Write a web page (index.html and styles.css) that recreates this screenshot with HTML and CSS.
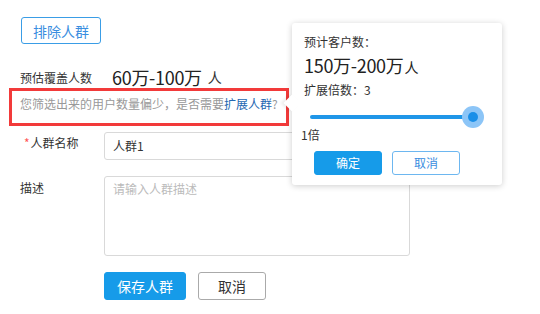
FILE: index.html
```html
<!DOCTYPE html>
<html lang="zh">
<head>
<meta charset="utf-8">
<link rel="stylesheet" href="styles.css">
</head>
<body>
<div class="page">
  <div class="row-top"><button class="btn btn-outline">排除人群</button></div>
  <div class="row-est">
    <span class="est-label">预估覆盖人数</span>
    <span class="est-value">60万-100万</span>
    <span class="est-unit">人</span>
  </div>
  <div class="hint">您筛选出来的用户数量偏少，是否需要<a class="hint-link">扩展人群</a>?</div>
  <div class="form-row row-name">
    <label class="form-label"><span class="req">*</span>人群名称</label>
    <div class="input">人群1</div>
  </div>
  <div class="form-row row-desc">
    <label class="form-label desc-label">描述</label>
    <div class="textarea"><span class="placeholder">请输入人群描述</span></div>
  </div>
  <div class="form-actions">
    <button class="btn btn-primary btn-save">保存人群</button>
    <button class="btn btn-default">取消</button>
  </div>

  <div class="popover">
    <div class="pop-arrow"></div>
    <div class="pop-title">预计客户数：</div>
    <div class="pop-value">150万-200万<span class="pop-unit">人</span></div>
    <div class="pop-mult">扩展倍数：3</div>
    <div class="slider">
      <div class="slider-track"></div>
      <div class="slider-handle"></div>
    </div>
    <div class="slider-min">1倍</div>
    <div class="pop-actions">
      <button class="btn btn-primary btn-sm">确定</button>
      <button class="btn btn-outline btn-sm btn-pop-cancel">取消</button>
    </div>
  </div>
</div>
</body>
</html>
```

FILE: styles.css
```css
* { box-sizing: border-box; }
html, body { margin: 0; padding: 0; background: #fff; }
body {
  font-family: "Noto Sans CJK SC", "Noto Sans", sans-serif;
  font-size: 12px;
  color: #333;
  width: 540px;
  height: 314px;
  overflow: hidden;
}
.page {
  position: relative;
  padding: 17px 0 0 20px;
  height: 314px;
}
.btn {
  font-family: inherit;
  border-radius: 3px;
  padding: 0;
  margin: 0;
  cursor: pointer;
  line-height: 1;
  display: inline-flex;
  align-items: center;
  justify-content: center;
}
.btn-outline {
  background: #fff;
  border: 1px solid #3a9de6;
  color: #3a8ee0;
  font-size: 14px;
  width: 80px;
  height: 27px;
  margin-left: 1px;
}
.row-top { display: flex; height: 27px; }
.row-est {
  display: flex;
  align-items: center;
  margin-top: 22px;
  height: 22px;
}
.est-label { width: 92px; font-size: 12px; color: #333; }
.est-value { font-size: 18px; color: #222; letter-spacing: -0.3px; }
.est-unit { font-size: 14px; margin-left: 6px; color: #333; }
.hint {
  margin-left: -11px;
  width: 280px;
  height: 38px;
  border: 3px solid #f23a3a;
  padding: 4px 0 0 8px;
  line-height: 18px;
  color: #999;
  font-size: 12px;
  white-space: nowrap;
}
.hint-link { color: #2467b1; }
.form-row { display: flex; align-items: flex-start; }
.row-name { margin-top: 6px; }
.form-label { width: 84px; line-height: 22px; color: #333; }
.req { color: #f55; margin: 0 1px 0 4px; }
.input {
  width: 306px;
  height: 28px;
  border: 1px solid #d9d9d9;
  border-radius: 3px;
  padding: 0 8px;
  line-height: 26px;
  color: #333;
}
.row-desc { margin-top: 16px; }
.desc-label { line-height: 24px; }
.textarea {
  width: 306px;
  height: 80px;
  border: 1px solid #d9d9d9;
  border-radius: 3px;
  padding: 3px 8px;
  line-height: 18px;
}
.placeholder { color: #bbb; }
.form-actions {
  display: flex;
  gap: 12px;
  margin: 16px 0 0 84px;
}
.btn-primary {
  background: #169be9;
  border: 1px solid #169be9;
  color: #fff;
  font-size: 14px;
}
.btn-save { width: 82px; height: 28px; }
.btn-default {
  background: #fff;
  border: 1px solid #aaa;
  color: #333;
  font-size: 14px;
  width: 68px;
  height: 28px;
}

/* popover */
.popover {
  position: absolute;
  left: 292px;
  top: 23px;
  width: 210px;
  height: 162px;
  background: #fff;
  border-radius: 3px;
  box-shadow: 0 1px 6px rgba(0,0,0,0.2);
  padding: 10px 12px 12px 12px;
}
.pop-arrow {
  position: absolute;
  left: -6px;
  top: 74px;
  width: 12px;
  height: 12px;
  background: #fff;
  transform: rotate(45deg);
  box-shadow: -2px 2px 3px rgba(0,0,0,0.08);
}
.pop-title { line-height: 18px; color: #333; position: relative; }
.pop-value {
  margin-top: 2px;
  font-size: 18px;
  line-height: 24px;
  color: #222;
  letter-spacing: -0.3px;
}
.pop-unit { font-size: 14px; margin-left: 1px; }
.pop-mult { margin-top: 2px; line-height: 18px; color: #333; }
.slider {
  position: relative;
  margin: 7px 0 0 6px;
  height: 22px;
  width: 174px;
}
.slider-track {
  position: absolute;
  left: 0;
  top: 9px;
  width: 163px;
  height: 4px;
  border-radius: 2px;
  background: #1f96e8;
}
.slider-handle {
  position: absolute;
  left: 152px;
  top: 0;
  width: 22px;
  height: 22px;
  border-radius: 50%;
  background: #8cc5f7;
}
.slider-handle::after {
  content: "";
  position: absolute;
  left: 6px;
  top: 6px;
  width: 10px;
  height: 10px;
  border-radius: 50%;
  background: #1a8fe8;
}
.slider-min {
  margin: -2px 0 0 -3px;
  line-height: 18px;
  color: #333;
}
.pop-actions {
  display: flex;
  gap: 10px;
  margin: 7px 0 0 10px;
}
.btn-sm { width: 68px; height: 24px; font-size: 12px; }
.btn-pop-cancel { margin-left: 0; border-color: #6db7f0; }
```
